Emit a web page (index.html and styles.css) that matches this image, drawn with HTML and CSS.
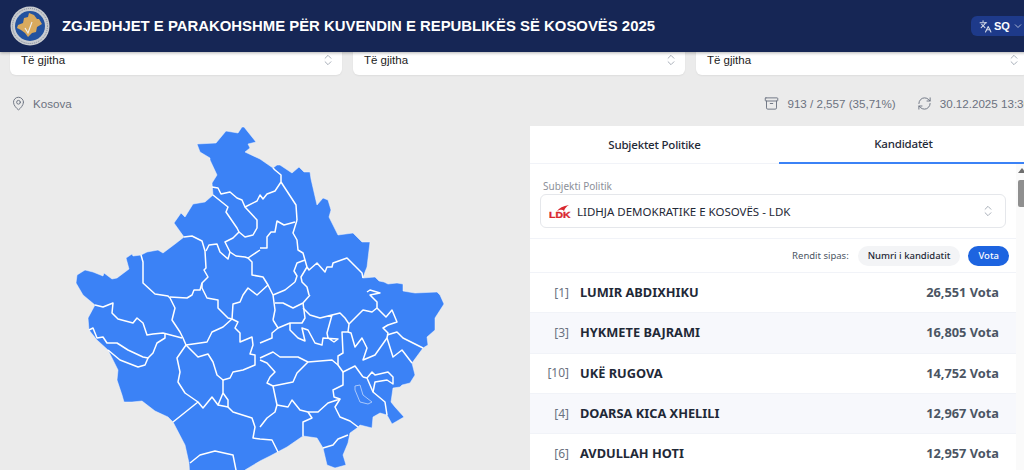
FILE: index.html
```html
<!DOCTYPE html>
<html lang="sq">
<head>
  <meta charset="UTF-8">
  <title>Zgjedhjet e Parakohshme 2025</title>
  <link rel="stylesheet" href="styles.css">
</head>
<body>

<div class="page">
  <header class="topbar">
    <svg class="seal" viewBox="0 0 40 40" width="40" height="40">
      <circle cx="20" cy="20" r="19.5" fill="#c9ccd0"/>
      <circle cx="20" cy="20" r="17.500" fill="none" stroke="#7d8594" stroke-width="1" stroke-dasharray="1 1"/>
      <circle cx="20" cy="20" r="15" fill="#23529f"/>
      <path d="M19 7L24 9 27 13 29 13 32 18 27 21 26 26 22 27 18 31 15 27 11 24 7 22 8 19 13 17 14 12 18 11Z" fill="#d9aa5e"/>
      <path d="M15 22l3 5 4-11" fill="none" stroke="#eef0f2" stroke-width="1.100"/>
    </svg>
    <h1 class="title">ZGJEDHJET E PARAKOHSHME PËR KUVENDIN E REPUBLIKËS SË KOSOVËS 2025</h1>
    <button class="lang">
      <svg viewBox="0 0 24 24" width="13" height="13" fill="none" stroke="currentColor" stroke-width="2" stroke-linecap="round" stroke-linejoin="round"><path d="m5 8 6 6"/><path d="m4 14 6-6 2-3"/><path d="M2 5h12"/><path d="M7 2h1"/><path d="m22 22-5-10-5 10"/><path d="M14 18h6"/></svg>
      <b>SQ</b>
      <svg viewBox="0 0 24 24" width="12" height="12" fill="none" stroke="currentColor" stroke-width="1.5"><path d="m6 9 6 6 6-6"/></svg>
    </button>
  </header>

  <div class="filters">
    <div class="filter">Të gjitha <svg class="updown" viewBox="0 0 24 24"><path d="m7 15 5 5 5-5"/><path d="m7 9 5-5 5 5"/></svg></div>
    <div class="filter">Të gjitha <svg class="updown" viewBox="0 0 24 24"><path d="m7 15 5 5 5-5"/><path d="m7 9 5-5 5 5"/></svg></div>
    <div class="filter">Të gjitha <svg class="updown" viewBox="0 0 24 24"><path d="m7 15 5 5 5-5"/><path d="m7 9 5-5 5 5"/></svg></div>
  </div>

  <div class="statusbar">
    <div class="place">
      <svg class="status-icon" viewBox="0 0 24 24"><path d="M20 10c0 5-5.5 10.200-7.400 11.800a1 1 0 0 1-1.200 0C9.500 20.200 4 15 4 10a8 8 0 0 1 16 0"/><circle cx="12" cy="10" r="3"/></svg>
      <span>Kosova</span>
    </div>
    <div class="stats">
      <svg class="status-icon" viewBox="0 0 24 24"><rect width="20" height="5" x="2" y="3" rx="1"/><path d="M4 8v11a2 2 0 0 0 2 2h12a2 2 0 0 0 2-2V8"/><path d="M10 12h4"/></svg>
      <span>913 / 2,557 (35,71%)</span>
      <svg class="status-icon sync" viewBox="0 0 24 24"><path d="M3 12a9 9 0 0 1 9-9 9.750 9.750 0 0 1 6.740 2.740L21 8"/><path d="M21 3v5h-5"/><path d="M21 12a9 9 0 0 1-9 9 9.750 9.750 0 0 1-6.740-2.740L3 16"/><path d="M8 16H3v5"/></svg>
      <span>30.12.2025 13:30</span>
    </div>
  </div>

  <div class="content">
    <div class="map">
      <svg viewBox="10 126 510 344" width="510" height="344">
        <path class="land" d="M197 144L216 143 226 131 238 133 242 127 244 127 256 142 248 144 250 148 245 152 260 159 273 168 277 165 280 165 292 173 299 167 304 172 310 172 311 179 317 205 323 198 328 200 331 210 329 217 338 235 353 233 362 242 370 242 367 267 365 272 363 278 375 277 379 281 384 282 388 284 397 283 403 284 403 291 415 293 437 292 440 295 444 304 435 318 435 330 427 337 428 345 423 348 412 363 415 375 410 383 402 385 400 387 393 388 391 402 395 407 404 417 392 424 387 415 380 413 373 417 372 428 360 425 357 428 350 433 348 443 343 455 346 465 335 468 327 465 323 448 317 438 303 436 287 447 270 456 260 461 245 470 245 480 190 480 189 463 185 445 173 422 168 417 155 411 142 401 132 402 124 402 122 395 117 380 118 370 108 350 97 340 89 330 88 318 95 305 83 295 76 283 77 275 85 270 93 272 103 276 104 273 112 279 117 278 129 269 126 258 132 254 133 256 141 255 147 252 158 250 163 253 175 244 184 237 174 223 181 213 185 217 193 204 205 202 213 195 212 183 217 175 210 160 210 158 200 152Z"/>
        <polyline class="line" points="212,187 218,188 221,194 230,192 237,198 242,200 245,207 257,201 260,195 263,199 267,194 275,191 281,182 281,175 275,170 273,168"/>
        <polyline class="line" points="213,195 228,207 226,212 237,228 239,232 233,238 225,242 230,252 236,256 245,257 248,258 260,250"/>
        <polyline class="line" points="245,207 257,220 257,228 253,235 245,237 239,232"/>
        <polyline class="line" points="184,237 192,236 202,241 205,251 206,268 204,270 208,277 202,283 202,288 207,298 218,300 218,308 228,318 232,319"/>
        <polyline class="line" points="206,251 209,245 217,244 220,252 228,259 230,252"/>
        <polyline class="line" points="141,255 143,262 143,283 155,294 168,296 170,298 175,308 172,320 180,332 183,338 186,345"/>
        <polyline class="line" points="170,297 187,298 192,295 194,290 200,290 202,283"/>
        <polyline class="line" points="248,258 252,262 252,275 263,277 268,285 257,295 248,288 243,295 240,302 233,304 232,319"/>
        <polyline class="line" points="268,285 273,295 275,310 273,320"/>
        <polyline class="line" points="273,295 285,290 295,282"/>
        <polyline class="line" points="232,319 223,327 212,332 207,342 186,345"/>
        <polyline class="line" points="232,319 238,322 235,328 240,333 240,342 252,337 253,345 250,354 255,355 255,365 243,370 233,372 230,378 223,380 217,375 213,362 208,354 198,357 188,347 186,345"/>
        <polyline class="line" points="95,305 103,307 113,303 112,313 118,319 133,323 137,318 143,323 147,335 153,334 163,333 182,338"/>
        <polyline class="line" points="165,333 165,338 157,343 153,353 148,358 143,357 128,350 117,343 107,343 103,337 97,338 93,328 89,330"/>
        <polyline class="line" points="108,350 120,360 138,367 145,365 148,358"/>
        <polyline class="line" points="186,345 177,358 180,372 178,382 185,393 198,402 188,410 173,422"/>
        <polyline class="line" points="198,402 203,408 212,397 218,405 223,393 223,380"/>
        <polyline class="line" points="218,405 228,407 228,400 223,393"/>
        <polyline class="line" points="228,407 233,412 252,418 255,427 253,438 260,439 272,440 278,452"/>
        <polyline class="line" points="190,463 200,455 215,451 233,455 237,475"/>
        <polyline class="line" points="273,320 278,328 272,333 272,338 260,343"/>
        <polyline class="line" points="275,303 283,303 293,308 303,303 310,295"/>
        <polyline class="line" points="303,303 305,318 302,323 290,323 278,328"/>
        <polyline class="line" points="290,323 290,330 298,338 305,341 302,328 308,330 315,343 322,345 323,338 338,339 334,342 328,338 327,333 332,315 320,318 310,315 303,308"/>
        <polyline class="line" points="332,315 340,313 345,318 349,324 348,332 342,332 343,353 338,356 338,365 343,372 355,366 363,377"/>
        <polyline class="line" points="349,324 363,310 372,312 377,308 377,302 370,295 380,293 370,290 367,292"/>
        <polyline class="line" points="377,308 386,317 392,310 397,322 388,325 383,328 388,333 387,338 393,357 402,350 412,363"/>
        <polyline class="line" points="387,335 397,332 403,338 413,343 423,348"/>
        <polyline class="line" points="387,338 375,355 363,360 367,348 362,338 355,347 351,333 348,332"/>
        <polyline class="line" points="260,358 273,352 280,357 298,357 308,362 332,360 338,365"/>
        <polyline class="line" points="260,360 267,363 275,372 270,377 267,383 273,386 277,405 275,412 267,418 260,427"/>
        <polyline class="line" points="273,386 293,382 297,373 308,362"/>
        <polyline class="line" points="343,372 343,385 333,390 334,397 340,399 328,403 318,412 308,412 300,410 292,400 288,407 277,405"/>
        <polyline class="line" points="340,399 335,407 340,417 350,421 358,427"/>
        <polyline class="line" points="308,412 312,418 303,422 303,436"/>
        <polyline class="line" points="323,448 333,445 338,439 348,435"/>
        <polyline class="line" points="363,377 367,378 373,392 385,402 387,415"/>
        <polyline class="line" points="367,378 372,372 375,375 388,372 393,377 393,384 387,380 375,382 373,392"/>
        <polyline class="line" points="297,220 296,205 281,182"/>
        <polyline class="line" points="297,220 293,233 297,240 298,250 303,253 307,267 309,270 317,263 325,272 327,267 332,267 333,263 347,258 362,273 363,278"/>
        <polyline class="line" points="295,222 284,225 277,221 275,232 271,232 267,237 267,248 260,248"/>
        <polyline class="line" points="305,260 297,263 294,271 297,276 295,282"/>
        <polyline class="line" points="307,267 301,277 302,282 307,287 309,295"/>
        <polygon class="lake" points="355,386 360,385 363,395 372,402 368,404 360,402 355,390"/>
      </svg>
    </div>

    <section class="panel">
      <div class="tabs">
        <div class="tab">Subjektet Politike</div>
        <div class="tab tab-active">Kandidatët</div>
      </div>
      <div class="panel-body">
        <div class="party-picker">
          <label class="picker-label">Subjekti Politik</label>
          <div class="picker">
            <svg class="ldk" viewBox="0 0 22 13" width="22" height="13">
              <path d="M8 6C10 3 14 1 20 0 17 2 16 3 15 6 13 4 11 5 8 6z" fill="#d9272e"/>
              <text x="0" y="12.500" class="ldk-text" textLength="21.500" lengthAdjust="spacingAndGlyphs">LDK</text>
            </svg>
            <span class="picker-name">LIDHJA DEMOKRATIKE E KOSOVËS - LDK</span>
            <svg class="updown" viewBox="0 0 24 24"><path d="m7 15 5 5 5-5"/><path d="m7 9 5-5 5 5"/></svg>
          </div>
        </div>
        <div class="sortbar">
          <span class="sort-label">Rendit sipas:</span>
          <span class="pill">Numri i kandidatit</span>
          <span class="pill pill-active">Vota</span>
        </div>
        <div class="row"><span class="num">[1]</span><span class="name">LUMIR ABDIXHIKU</span><span class="votes">26,551 Vota</span></div>
        <div class="row"><span class="num">[3]</span><span class="name">HYKMETE BAJRAMI</span><span class="votes">16,805 Vota</span></div>
        <div class="row"><span class="num">[10]</span><span class="name">UKË RUGOVA</span><span class="votes">14,752 Vota</span></div>
        <div class="row"><span class="num">[4]</span><span class="name">DOARSA KICA XHELILI</span><span class="votes">12,967 Vota</span></div>
        <div class="row"><span class="num">[6]</span><span class="name">AVDULLAH HOTI</span><span class="votes">12,957 Vota</span></div>
      </div>
      <div class="scrollbar">
        <div class="scroll-arrow"></div>
        <div class="scroll-thumb"></div>
      </div>
    </section>
  </div>
</div>

</body>
</html>
```

FILE: styles.css
```css
html, body {
  margin: 0;
  height: 470px;
  overflow: hidden;
}
body {
  font-family: "Liberation Sans", Arial, sans-serif;
  background: #ebebeb;
}
.page {
  width: 1028px;
  height: 470px;
}
.topbar {
  position: relative;
  z-index: 2;
  display: flex;
  align-items: center;
  height: 52px;
  padding-left: 10px;
  background: #162655;
  box-shadow: 0 1px 3px rgba(0,0,0,0.3);
}
.seal {
  flex: none;
}
.title {
  flex: 1;
  margin: 0 0 0 12px;
  font-size: 14.900px;
  font-weight: 700;
  color: #fff;
  white-space: nowrap;
}
.lang {
  display: flex;
  align-items: center;
  gap: 2px;
  width: 57px;
  height: 20px;
  padding: 0 0 0 8px;
  border: 0;
  border-radius: 6px;
  background: #1e3a8a;
  color: #d5dbe8;
  font-family: inherit;
  font-size: 11px;
}
.lang b {
  color: #fff;
}
.filters {
  display: grid;
  grid-template-columns: repeat(3, 1fr);
  gap: 11px;
  margin: -7px 0 0 10px;
}
.filter {
  display: flex;
  justify-content: space-between;
  align-items: center;
  height: 30px;
  padding: 0 7px 0 11px;
  background: #fff;
  border-radius: 6px;
  box-shadow: 0 1px 2px rgba(0,0,0,0.06);
  font-size: 11.500px;
  color: #222;
}
.updown {
  width: 14px;
  height: 14px;
  fill: none;
  stroke: #9ca3af;
  stroke-width: 1.500;
  stroke-linecap: round;
  stroke-linejoin: round;
}
.statusbar {
  display: flex;
  justify-content: space-between;
  align-items: center;
  height: 16px;
  margin: 20px 0 0 11px;
  font-size: 11.600px;
  color: #6b7280;
}
.place, .stats {
  display: flex;
  align-items: center;
}
.place span {
  margin-left: 7px;
}
.stats {
  margin-right: -2px;
  white-space: nowrap;
}
.stats span {
  margin-left: 8px;
}
.status-icon {
  width: 15px;
  height: 15px;
  fill: none;
  stroke: #6b7280;
  stroke-width: 1.500;
  stroke-linecap: round;
  stroke-linejoin: round;
}
.sync {
  margin-left: 21px;
}
.content {
  display: flex;
  gap: 10px;
  margin: 15px 0 0 10px;
  height: 344px;
}
.map {
  flex: none;
  width: 510px;
}
.map svg {
  display: block;
}
.land {
  fill: #3b82f6;
  stroke: #f4f7fd;
  stroke-width: 0.500;
}
.line {
  fill: none;
  stroke: #fff;
  stroke-width: 1.500;
  stroke-linejoin: round;
}
.lake {
  fill: #3b82f6;
  stroke: #a9c8fb;
  stroke-width: 1;
}
.panel {
  position: relative;
  flex: 1;
  background: #fff;
  font-family: "Noto Sans", "Open Sans", sans-serif;
  overflow: hidden;
}
.tabs {
  display: flex;
  box-sizing: border-box;
  height: 38px;
  border-bottom: 1px solid #f1f3f8;
}
.tab {
  flex: 1;
  padding-top: 11px;
  text-align: center;
  font-size: 11.500px;
  letter-spacing: -0.2px;
  font-weight: 500;
  color: #1f2937;
}
.tab-active {
  border-bottom: 2px solid #3b82f6;
  padding-top: 10px;
  margin-bottom: -1px;
}
.panel-body {
  width: 486px;
}
.party-picker {
  padding: 15px 10px 10px;
  height: 49px;
  border-bottom: 1px solid #f1f3f8;
}
.picker-label {
  display: block;
  font-size: 10px;
  line-height: 14px;
  color: #8b8f98;
  margin: 0 0 1px 3px;
}
.picker {
  display: flex;
  align-items: center;
  height: 32px;
  padding: 0 10px 0 8px;
  border: 1px solid #e5e7eb;
  border-radius: 6px;
  font-size: 11.500px;
  color: #1f2937;
}
.ldk {
  flex: none;
}
.ldk-text {
  font-family: "Liberation Sans", sans-serif;
  font-size: 8.500px;
  font-weight: 700;
  fill: #d9272e;
  stroke: #d9272e;
  stroke-width: 0.300;
}
.picker-name {
  flex: 1;
  margin-left: 6px;
}
.sortbar {
  display: flex;
  justify-content: flex-end;
  align-items: center;
  gap: 8px;
  height: 33px;
  padding-right: 7px;
  border-bottom: 1px solid #f1f3f8;
  font-size: 9.500px;
  color: #4b5563;
}
.sort-label {
  margin-right: 1px;
}
.pill {
  height: 20px;
  line-height: 20px;
  padding: 0 10px;
  border-radius: 10px;
  background: #f3f4f6;
  color: #1f2937;
  font-weight: 500;
}
.pill-active {
  background: #1d64e0;
  color: #fff;
}
.row {
  display: flex;
  align-items: center;
  height: 40.300px;
  box-sizing: border-box;
  padding: 0 17px 1px 0;
  border-bottom: 1px solid #f1f3f8;
  font-size: 12.800px;
}
.row:nth-of-type(even) {
  background: #f7f8fc;
}
.num {
  width: 39px;
  text-align: right;
  color: #6b7280;
  font-size: 12px;
}
.name {
  flex: 1;
  margin-left: 11px;
  font-weight: 700;
  color: #1f2937;
}
.votes {
  font-weight: 700;
  color: #4b5563;
}
.scrollbar {
  position: absolute;
  top: 38px;
  right: 0;
  width: 12px;
  bottom: 0;
  background: #fafafa;
}
.scroll-arrow {
  width: 0;
  margin: 4px auto 0;
  border: 4px solid transparent;
  border-top: 0;
  border-bottom: 5px solid #6e6e6e;
}
.scroll-thumb {
  height: 27px;
  margin: 7px 2px 0;
  background: #8f8f8f;
  border-radius: 2px;
}
```
